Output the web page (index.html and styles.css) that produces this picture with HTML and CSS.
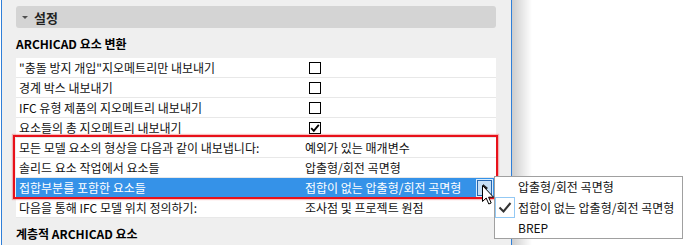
FILE: index.html
```html
<!DOCTYPE html>
<html><head><meta charset="utf-8">
<title>설정</title>
<link rel="stylesheet" href="styles.css">
</head>
<body>
<div class="page">
	<div class="panel">
		<div class="bar"><span class="tri"></span>설정</div>
		<div class="group">ARCHICAD 요소 변환</div>
		<div class="table">
			<div class="row"><div class="key">"충돌 방지 개입"지오메트리만 내보내기</div><div class="val"><span class="chk"></span></div></div>
			<div class="row"><div class="key">경계 박스 내보내기</div><div class="val"><span class="chk"></span></div></div>
			<div class="row"><div class="key">IFC 유형 제품의 지오메트리 내보내기</div><div class="val"><span class="chk"></span></div></div>
			<div class="row"><div class="key">요소들의 총 지오메트리 내보내기</div><div class="val"><span class="chk on"><svg width="10" height="10" viewBox="0 0 10 10"><path d="M1.2 5.2 L3.8 7.8 L8.8 1.8" fill="none" stroke="#000" stroke-width="1.8"/></svg></span></div></div>
			<div class="row"><div class="key">모든 모델 요소의 형상을 다음과 같이 내보냅니다:</div><div class="val">예외가 있는 매개변수</div></div>
			<div class="row"><div class="key">솔리드 요소 작업에서 요소들</div><div class="val">압출형/회전 곡면형</div></div>
			<div class="row sel"><div class="key">접합부분를 포함한 요소들</div><div class="val">접합이 없는 압출형/회전 곡면형<span class="drop"><span class="arrow"></span></span></div></div>
			<div class="row"><div class="key">다음을 통해 IFC 모델 위치 정의하기:</div><div class="val">조사점 및 프로젝트 원점</div></div>
		</div>
		<div class="group">계층적 ARCHICAD 요소</div>
	</div>
	<div class="shade"></div>
</div>

<div class="mark"></div>

<div class="menu">
	<div class="item">압출형/회전 곡면형</div>
	<div class="item cur"><span class="tick"><svg width="18" height="19" viewBox="0 0 18 19"><path d="M3.5 9.5 L7.5 13.5 L14.5 5" fill="none" stroke="#333" stroke-width="2"/></svg></span>접합이 없는 압출형/회전 곡면형</div>
	<div class="item">BREP</div>
</div>

<svg class="cursor" width="13" height="21" viewBox="0 0 13 21"><path d="M0.5 0.5 L0.5 16.5 L4.2 13 L6.8 19 L9.2 18 L6.6 12.2 L11.5 12.2 Z" fill="#fff" stroke="#000" stroke-width="1" stroke-linejoin="round"/></svg>
</body>
</html>
```

FILE: styles.css
```css
body {
	margin: 0px;
	background: #fff;
	font-family: "Noto Sans CJK KR", sans-serif;
	font-size: 12px;
	color: #111;
}
.page {
	display: flex;
	height: 245px;
	overflow: hidden;
}
.panel {
	box-sizing: border-box;
	width: 511px;
	margin-left: 1px;
	padding: 6px 15px 0 14px;
	background: #efefef;
	border-left: 1px solid #2f7fd8;
	border-right: 1px solid #2f7fd8;
}
.shade {
	width: 20px;
	background: linear-gradient(to right, #cdcdcd, #fff);
}
.bar {
	display: flex;
	align-items: center;
	height: 22px;
	padding-left: 6px;
	border-radius: 3px;
	background: #d4d4d4;
	font-weight: bold;
	font-size: 13px;
	color: #222;
}
.tri {
	width: 0;
	height: 0;
	border-left: 3px solid transparent;
	border-right: 3px solid transparent;
	border-top: 3px solid #505050;
	margin-right: 6px;
}
.group {
	padding: 8px 0 6px;
	line-height: 16px;
	font-weight: bold;
	color: #000;
}
.table {
	background: #fff;
}
.row {
	display: grid;
	grid-template-columns: 289px 1fr;
	height: 19px;
	line-height: 19px;
	border-bottom: 1px solid #e8e8e8;
	white-space: nowrap;
}
.row .key {
	padding-left: 3px;
}
.row .val {
	display: flex;
	align-items: center;
}
.row.sel {
	background: #3592e8;
	color: #fff;
}
.chk {
	display: flex;
	align-items: center;
	justify-content: center;
	box-sizing: border-box;
	width: 12px;
	height: 12px;
	margin-left: 4px;
	border: 1px solid #000;
}
.drop {
	display: flex;
	align-items: center;
	justify-content: center;
	box-sizing: border-box;
	width: 17px;
	height: 18px;
	margin-left: auto;
	margin-right: 3px;
	border: 1px solid #d8ecfd;
	box-shadow: inset 0 0 0 1px #2766ad;
	background: #c6dff5;
}
.arrow {
	width: 0;
	height: 0;
	border-left: 5px solid #1e1e1e;
	border-top: 4px solid transparent;
	border-bottom: 4px solid transparent;
	margin-left: 1px;
}
.mark {
	position: absolute;
	left: 13px;
	top: 135px;
	width: 485px;
	height: 64px;
	box-sizing: border-box;
	border: 2px solid #e8111a;
	box-shadow: 0 0 1px 1px rgba(240, 70, 70, .35);
}
.menu {
	position: absolute;
	left: 494px;
	top: 176px;
	width: 189px;
	box-sizing: border-box;
	border: 1px solid #a0a0a0;
	background: #fff;
	color: #111;
}
.item {
	position: relative;
	height: 20px;
	line-height: 20px;
	padding-left: 23px;
	white-space: nowrap;
}
.item.cur {
	height: 21px;
	line-height: 21px;
}
.tick {
	position: absolute;
	left: 0;
	top: 0;
	width: 20px;
	height: 21px;
	box-sizing: border-box;
	border: 1px solid #93c9f4;
}
.tick svg {
	display: block;
}
.cursor {
	position: absolute;
	left: 482px;
	top: 185px;
}
```
